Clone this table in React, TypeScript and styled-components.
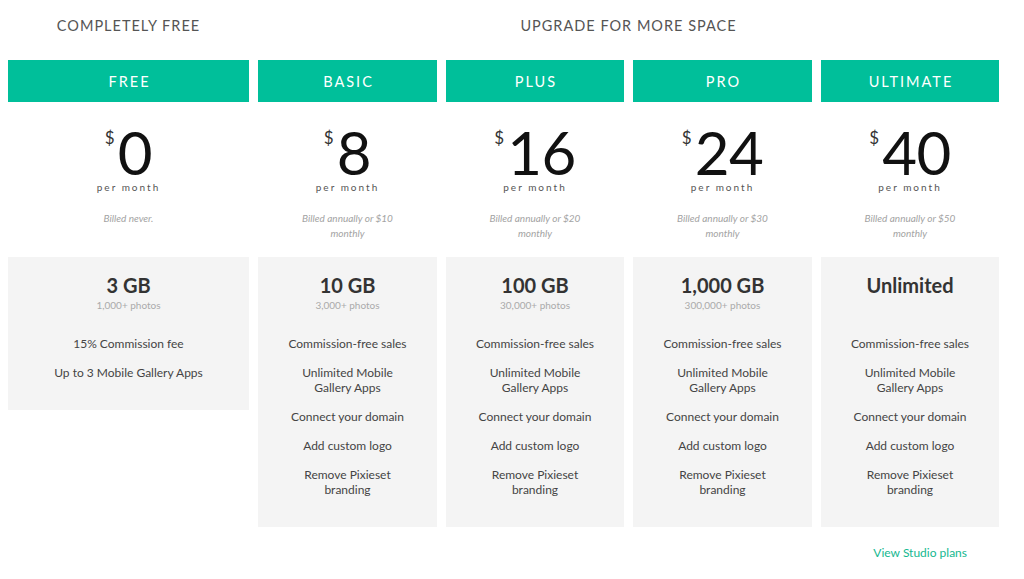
import React from 'react';
import styled, { createGlobalStyle } from 'styled-components';

const GlobalStyle = createGlobalStyle`
  body {
    margin: 0;
    background: #fff;
    font-family: Lato, 'Open Sans', sans-serif;
    color: #333;
  }
`;

interface Plan {
  name: string;
  price: number;
  billed: string;
  storage: string;
  photos?: string;
  features: string[];
}

const plans: Plan[] = [
  {
    name: 'FREE',
    price: 0,
    billed: 'Billed never.',
    storage: '3 GB',
    photos: '1,000+ photos',
    features: ['15% Commission fee', 'Up to 3 Mobile Gallery Apps'],
  },
  {
    name: 'BASIC',
    price: 8,
    billed: 'Billed annually or $10 monthly',
    storage: '10 GB',
    photos: '3,000+ photos',
    features: [],
  },
  {
    name: 'PLUS',
    price: 16,
    billed: 'Billed annually or $20 monthly',
    storage: '100 GB',
    photos: '30,000+ photos',
    features: [],
  },
  {
    name: 'PRO',
    price: 24,
    billed: 'Billed annually or $30 monthly',
    storage: '1,000 GB',
    photos: '300,000+ photos',
    features: [],
  },
  {
    name: 'ULTIMATE',
    price: 40,
    billed: 'Billed annually or $50 monthly',
    storage: 'Unlimited',
    features: [],
  },
];

const paidFeatures = [
  'Commission-free sales',
  'Unlimited Mobile Gallery Apps',
  'Connect your domain',
  'Add custom logo',
  'Remove Pixieset branding',
];

export default function App() {
  return (
    <>
      <GlobalStyle />
      <Page>
        <Grid>
          <GroupLabel $span={1}>COMPLETELY FREE</GroupLabel>
          <GroupLabel $span={4}>UPGRADE FOR MORE SPACE</GroupLabel>
          {plans.map((plan) => {
            const features = plan.features.length ? plan.features : paidFeatures;
            return (
              <Column key={plan.name}>
                <PlanHeader>{plan.name}</PlanHeader>
                <PriceBlock>
                  <Price>
                    <Dollar>$</Dollar>
                    {plan.price}
                  </Price>
                  <PerMonth>per month</PerMonth>
                  <Billed>{plan.billed}</Billed>
                </PriceBlock>
                <FeatureBox>
                  <Storage>{plan.storage}</Storage>
                  <Photos>{plan.photos ?? '\u00a0'}</Photos>
                  <FeatureList>
                    {features.map((f) => (
                      <Feature key={f}>{f}</Feature>
                    ))}
                  </FeatureList>
                </FeatureBox>
              </Column>
            );
          })}
        </Grid>
        <Footer>
          <StudioLink href="#">View Studio plans</StudioLink>
        </Footer>
      </Page>
    </>
  );
}

const Page = styled.div`
  width: 1024px;
  height: 579px;
  padding: 0 0 0 8px;
  box-sizing: border-box;
  overflow: hidden;
`;

const Grid = styled.div`
  display: grid;
  grid-template-columns: 241px 179px 178px 179px 178px;
  column-gap: 9px;
  align-items: start;
`;

const GroupLabel = styled.div<{ $span: number }>`
  grid-column: span ${(p) => p.$span};
  height: 60px;
  display: flex;
  align-items: center;
  justify-content: center;
  padding-bottom: 9px;
  box-sizing: border-box;
  font-size: 14.5px;
  letter-spacing: 1px;
  color: #555;
`;

const Column = styled.div`
  display: flex;
  flex-direction: column;
`;

const PlanHeader = styled.div`
  height: 42px;
  background: #00bf9a;
  color: #fff;
  display: flex;
  align-items: center;
  justify-content: center;
  font-size: 14.5px;
  letter-spacing: 2px;
  padding-left: 2px;
`;

const PriceBlock = styled.div`
  height: 155px;
  display: flex;
  flex-direction: column;
  align-items: center;
  padding-top: 21px;
  box-sizing: border-box;
`;

const Price = styled.div`
  position: relative;
  font-size: 60px;
  font-weight: 400;
  line-height: 58px;
  color: #111;
  letter-spacing: -0.5px;
  padding-left: 13px;
`;

const Dollar = styled.span`
  position: absolute;
  left: 0;
  top: 6px;
  font-size: 17px;
  line-height: 17px;
  color: #333;
  letter-spacing: 0;
`;

const PerMonth = styled.div`
  font-size: 10px;
  line-height: 12px;
  letter-spacing: 2px;
  color: #555;
  margin-top: 0;
`;

const Billed = styled.div`
  font-size: 10px;
  font-style: italic;
  line-height: 15px;
  color: #a3a3a3;
  text-align: center;
  max-width: 110px;
  margin-top: 18px;
`;

const FeatureBox = styled.div`
  background: #f4f4f4;
  display: flex;
  flex-direction: column;
  align-items: center;
  padding: 14px 24px 30px;
`;

const Storage = styled.div`
  font-size: 20px;
  font-weight: 700;
  color: #333;
  line-height: 28px;
`;

const Photos = styled.div`
  font-size: 10px;
  color: #aaa;
  line-height: 13px;
`;

const FeatureList = styled.div`
  display: flex;
  flex-direction: column;
  align-items: center;
  gap: 14px;
  margin-top: 24px;
`;

const Feature = styled.div`
  font-size: 12px;
  line-height: 15px;
  color: #444;
  text-align: center;
`;

const Footer = styled.div`
  display: flex;
  justify-content: flex-end;
  padding: 18px 57px 0 0;
`;

const StudioLink = styled.a`
  font-size: 12px;
  color: #14b890;
  text-decoration: none;
`;
